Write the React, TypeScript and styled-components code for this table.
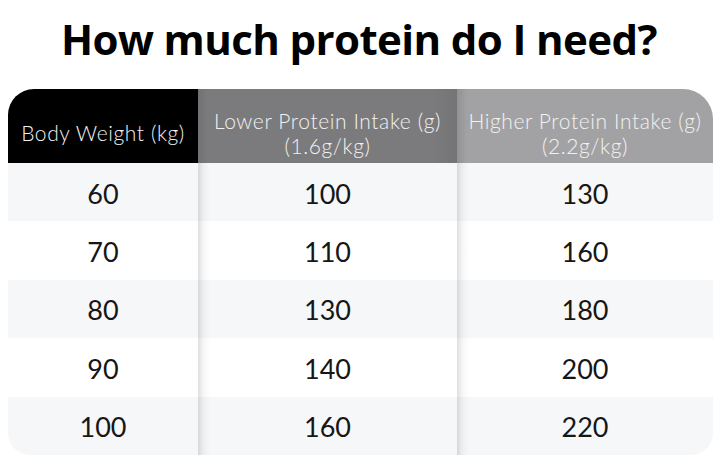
import React from "react";
import styled, { createGlobalStyle } from "styled-components";

const Global = createGlobalStyle`
  html, body { margin: 0; padding: 0; background: #ffffff; }
  body { width: 720px; height: 471px; overflow: hidden; }
`;

const Page = styled.div`
  width: 720px;
  height: 471px;
  display: flex;
  flex-direction: column;
  align-items: stretch;
  background: #fff;
`;

const Title = styled.h1`
  margin: 0;
  height: 89px;
  display: flex;
  align-items: center;
  justify-content: center;
  padding-bottom: 12px;
  padding-right: 2px;
  box-sizing: border-box;
  font-family: "Open Sans", "Liberation Sans", sans-serif;
  font-weight: 700;
  font-size: 42px;
  letter-spacing: -0.6px;
  color: #000;
`;

const Table = styled.div`
  margin-left: 8px;
  width: 705px;
  display: grid;
  grid-template-columns: 190px 259px 256px;
  grid-template-rows: 74px repeat(5, 58.4px);
  font-family: "Lato", "Liberation Sans", sans-serif;
`;

const headBg = ["#000000", "#7b7b7d", "#a2a2a4"];

const HeadCell = styled.div<{ $col: number }>`
  background: ${(p) => headBg[p.$col]};
  ${(p) =>
    p.$col === 1
      ? "background-image: linear-gradient(to right, rgba(0,0,0,0.08), rgba(0,0,0,0) 10px, rgba(0,0,0,0) 235px, rgba(0,0,0,0.06));"
      : p.$col === 2
      ? "background-image: linear-gradient(to right, rgba(0,0,0,0.1), rgba(0,0,0,0) 10px);"
      : ""}
  border-top-left-radius: ${(p) => (p.$col === 0 ? "26px" : "0")};
  border-top-right-radius: ${(p) => (p.$col === 2 ? "30px" : "0")};
  color: #f2f2f2;
  font-size: 21px;
  font-weight: 300;
  letter-spacing: 0.6px;
  line-height: 25px;
  display: flex;
  flex-direction: column;
  align-items: center;
  justify-content: center;
  text-align: center;
  padding-top: 13px;
  box-sizing: border-box;
  white-space: nowrap;
`;

const Cell = styled.div<{ $col: number; $row: number }>`
  background-color: ${(p) => (p.$row % 2 === 0 ? "#f6f7f9" : "#ffffff")};
  ${(p) =>
    p.$col > 0
      ? "background-image: linear-gradient(to right, rgba(0,0,0,0.13), rgba(0,0,0,0.04) 5px, rgba(0,0,0,0) 12px);"
      : ""}
  border-bottom-left-radius: ${(p) => (p.$row === 4 && p.$col === 0 ? "22px" : "0")};
  border-bottom-right-radius: ${(p) => (p.$row === 4 && p.$col === 2 ? "22px" : "0")};
  display: flex;
  align-items: center;
  justify-content: center;
  color: #161616;
  font-size: 27px;
  font-weight: 400;
  padding-top: 2px;
  box-sizing: border-box;
`;

const headers = [
  ["Body Weight (kg)"],
  ["Lower Protein Intake (g)", "(1.6g/kg)"],
  ["Higher Protein Intake (g)", "(2.2g/kg)"],
];

const rows = [
  [60, 100, 130],
  [70, 110, 160],
  [80, 130, 180],
  [90, 140, 200],
  [100, 160, 220],
];

export default function App() {
  return (
    <Page>
      <Global />
      <Title>How much protein do I need?</Title>
      <Table>
        {headers.map((lines, c) => (
          <HeadCell key={c} $col={c}>
            {lines.map((l) => (
              <span key={l}>{l}</span>
            ))}
          </HeadCell>
        ))}
        {rows.map((r, ri) =>
          r.map((v, ci) => (
            <Cell key={`${ri}-${ci}`} $col={ci} $row={ri}>
              {v}
            </Cell>
          ))
        )}
      </Table>
    </Page>
  );
}
